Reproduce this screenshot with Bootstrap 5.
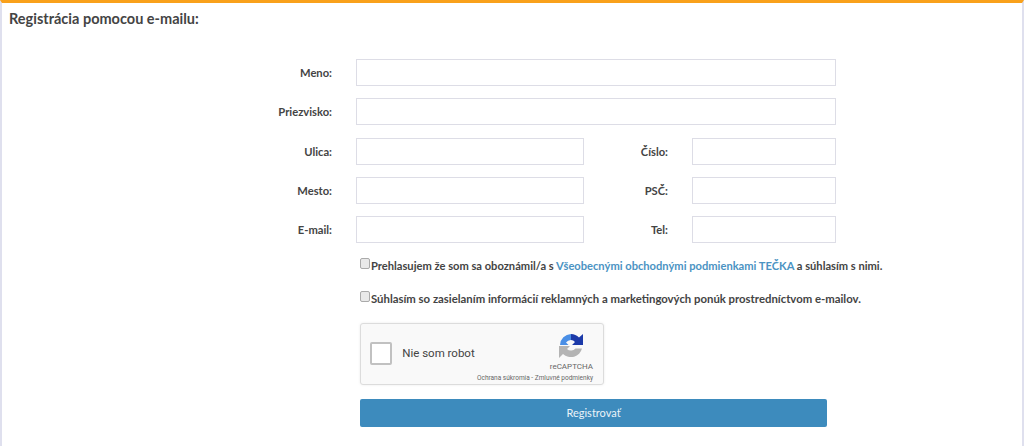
<!DOCTYPE html>
<html lang="sk"><head><meta charset="utf-8">
<title>Registrácia</title>
<link href="https://cdn.jsdelivr.net/npm/bootstrap@5.3.0/dist/css/bootstrap.min.css" rel="stylesheet">
<style>
html,body{height:446px;overflow:hidden}
body{font-family:"Lato","Liberation Sans",sans-serif;font-size:12px;color:#444;background:#fff}
.shell{height:446px;border-top:3px solid #f9a11b;border-left:2px solid #dfe0ee;border-right:2px solid #dfe0ee}
.ttl{font-size:14.5px;font-weight:700;color:#444;margin:0;padding:7px 0 0 7px;line-height:18px;height:56px}
.frow{height:27px;margin-bottom:12.25px}
.lab{font-weight:700;font-size:11.2px;text-align:right;margin:0;padding-top:2px;color:#444}
.lab1{width:330px}
.lab2{width:84px}
.fld{height:27px;border:1px solid #dddde6;border-radius:0;padding:0 8px;background:#fff;display:block}
.f-wide{width:480px;margin-left:24px}
.f-a{width:228px;margin-left:24px}
.f-b{width:144px;margin-left:24px}
.chk{margin-left:358px;height:14px;font-weight:700;color:#444;white-space:nowrap;line-height:14px}
.chk-a{font-size:11.15px;margin-top:15.25px}
.chk-b{font-size:11.35px;margin-top:19px}
.chk span{padding-top:1px}
.box{appearance:none;width:10px;height:11px;border:1px solid #aaa;border-radius:2px;background:#e9e9e9;margin:0 1px 0 0;flex:none}
.chk a{color:#4b93c3;text-decoration:none}
.cap{margin:18px 0 0 358px;width:244px;height:62px;background:#f9f9f9;border:1px solid #dcdcdc;border-radius:3px;font-family:Roboto,"Liberation Sans",sans-serif;box-shadow:0 0 3px rgba(0,0,0,.08)}
.tick{width:23px;height:23px;background:#fff;border:2px solid #c1c1c1;border-radius:2px;margin:18px 0 0 9px}
.caplab{font-size:11.5px;color:#444;margin:20px 0 0 10px;line-height:18px;width:120px}
.capr{width:78px;margin-left:auto;margin-right:10px;text-align:right}
.capr svg{display:block;margin:9px 9px 0 auto}
.capn{font-size:8px;line-height:10px;color:#666;margin-top:3px}
.capt{font-size:6.5px;line-height:9px;color:#666;white-space:nowrap;margin-left:-40px;margin-top:2px}
.go{display:block;margin:14px 0 0 358px;width:467px;height:28px;background:#3d8bbd;border:0;border-radius:2px;color:#eaf3f9;font-size:11px;padding:0;line-height:28px}
</style></head>
<body>
<div class="shell">
<h1 class="ttl">Registrácia pomocou e-mailu:</h1>
<form>
<div class="d-flex align-items-center frow"><label class="lab lab1">Meno:</label><input class="fld f-wide"></div>
<div class="d-flex align-items-center frow"><label class="lab lab1">Priezvisko:</label><input class="fld f-wide"></div>
<div class="d-flex align-items-center frow"><label class="lab lab1">Ulica:</label><input class="fld f-a"><label class="lab lab2">Číslo:</label><input class="fld f-b"></div>
<div class="d-flex align-items-center frow"><label class="lab lab1">Mesto:</label><input class="fld f-a"><label class="lab lab2">PSČ:</label><input class="fld f-b"></div>
<div class="d-flex align-items-center frow"><label class="lab lab1">E-mail:</label><input class="fld f-a"><label class="lab lab2">Tel:</label><input class="fld f-b"></div>
<div class="chk chk-a d-flex"><input type="checkbox" class="box"><span>Prehlasujem že som sa oboznámil/a s <a href="#">Všeobecnými obchodnými podmienkami TEČKA</a> a súhlasím s nimi.</span></div>
<div class="chk chk-b d-flex"><input type="checkbox" class="box"><span>Súhlasím so zasielaním informácií reklamných a marketingových ponúk prostredníctvom e-mailov.</span></div>
<div class="cap d-flex">
<div class="tick"></div>
<div class="caplab">Nie som robot</div>
<div class="capr">
<svg width="26" height="26" viewBox="0 0 26 26"><path d="M2 12A11.500 11.500 0 0 1 13 1V7A6 6 0 0 0 8 9.500L10.500 12Z" fill="#4a8fe6"/><path d="M13 1A11.500 11.500 0 0 1 21 4.500L25 1V12H14L17 9A6 6 0 0 0 13 7Z" fill="#1c3aa9"/><path d="M1 13H12L9 16A6 6 0 0 0 17.500 15.500H24A11.500 11.500 0 0 1 5 21L1 25Z" fill="#b4b4b4"/></svg>
<div class="capn">reCAPTCHA</div>
<div class="capt">Ochrana súkromia - Zmluvné podmienky</div>
</div>
</div>
<button type="button" class="go">Registrovať</button>
</form>
</div>
<script src="https://cdn.jsdelivr.net/npm/bootstrap@5.3.0/dist/js/bootstrap.bundle.min.js"></script>
</body></html>
